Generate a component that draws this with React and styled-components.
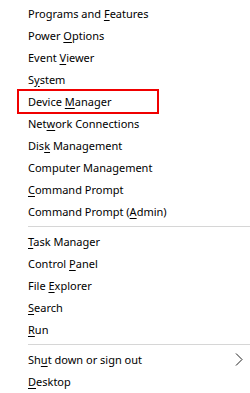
import React from 'react'
import styled, { createGlobalStyle } from 'styled-components'

const GlobalStyle = createGlobalStyle`
  html, body {
    margin: 0;
    padding: 0;
    background: #ffffff;
  }
`

const Menu = styled.div`
  width: 250px;
  height: 393px;
  box-sizing: border-box;
  padding-top: 2px;
  background: #ffffff;
  font-family: "Noto Sans", "Open Sans", sans-serif;
  font-size: 11px;
  color: #000000;
  display: flex;
  flex-direction: column;
`

const Item = styled.div`
  position: relative;
  height: 22px;
  display: flex;
  align-items: center;
  padding-left: 28px;
  white-space: nowrap;
  box-sizing: border-box;

  &::after {
    content: '';
    display: ${props => (props.$marked ? 'block' : 'none')};
    position: absolute;
    left: 17px;
    top: -1px;
    width: 142px;
    height: 25px;
    box-sizing: border-box;
    border: 2px solid #f00000;
  }
`

const Label = styled.span`
  flex: 1;
`

const Key = styled.span`
  text-decoration: underline;
  text-underline-offset: 2px;
`

const Separator = styled.div`
  height: 1px;
  margin: 4px 0 3px 28px;
  background: #d6d6d6;
`

const Chevron = () => (
  <svg width='8' height='13' viewBox='0 0 8 13' style={{ marginRight: 7 }}>
    <polyline points='1,0.5 7,6.5 1,12.5' fill='none' stroke='#222' strokeWidth='1' />
  </svg>
)

const groups = [
  [
    ['Programs and ', 'F', 'eatures'],
    ['Power ', 'O', 'ptions'],
    ['Event ', 'V', 'iewer'],
    ['S', 'y', 'stem'],
    ['Device ', 'M', 'anager', true],
    ['Net', 'w', 'ork Connections'],
    ['Dis', 'k', ' Management'],
    ['Computer Mana', 'g', 'ement'],
    ['', 'C', 'ommand Prompt'],
    ['Command Prompt (', 'A', 'dmin)']
  ],
  [
    ['', 'T', 'ask Manager'],
    ['Control ', 'P', 'anel'],
    ['File ', 'E', 'xplorer'],
    ['', 'S', 'earch'],
    ['', 'R', 'un']
  ],
  [
    ['Sh', 'u', 't down or sign out', false, true],
    ['', 'D', 'esktop']
  ]
]

export default function App () {
  return (
    <>
      <GlobalStyle />
      <Menu>
        {groups.map((group, gi) => (
          <React.Fragment key={gi}>
            {gi > 0 && <Separator />}
            {group.map(([before, key, after, marked, sub], i) => (
              <Item key={i} $marked={marked}>
                <Label>{before}<Key>{key}</Key>{after}</Label>
                {sub && <Chevron />}
              </Item>
            ))}
          </React.Fragment>
        ))}
      </Menu>
    </>
  )
}
